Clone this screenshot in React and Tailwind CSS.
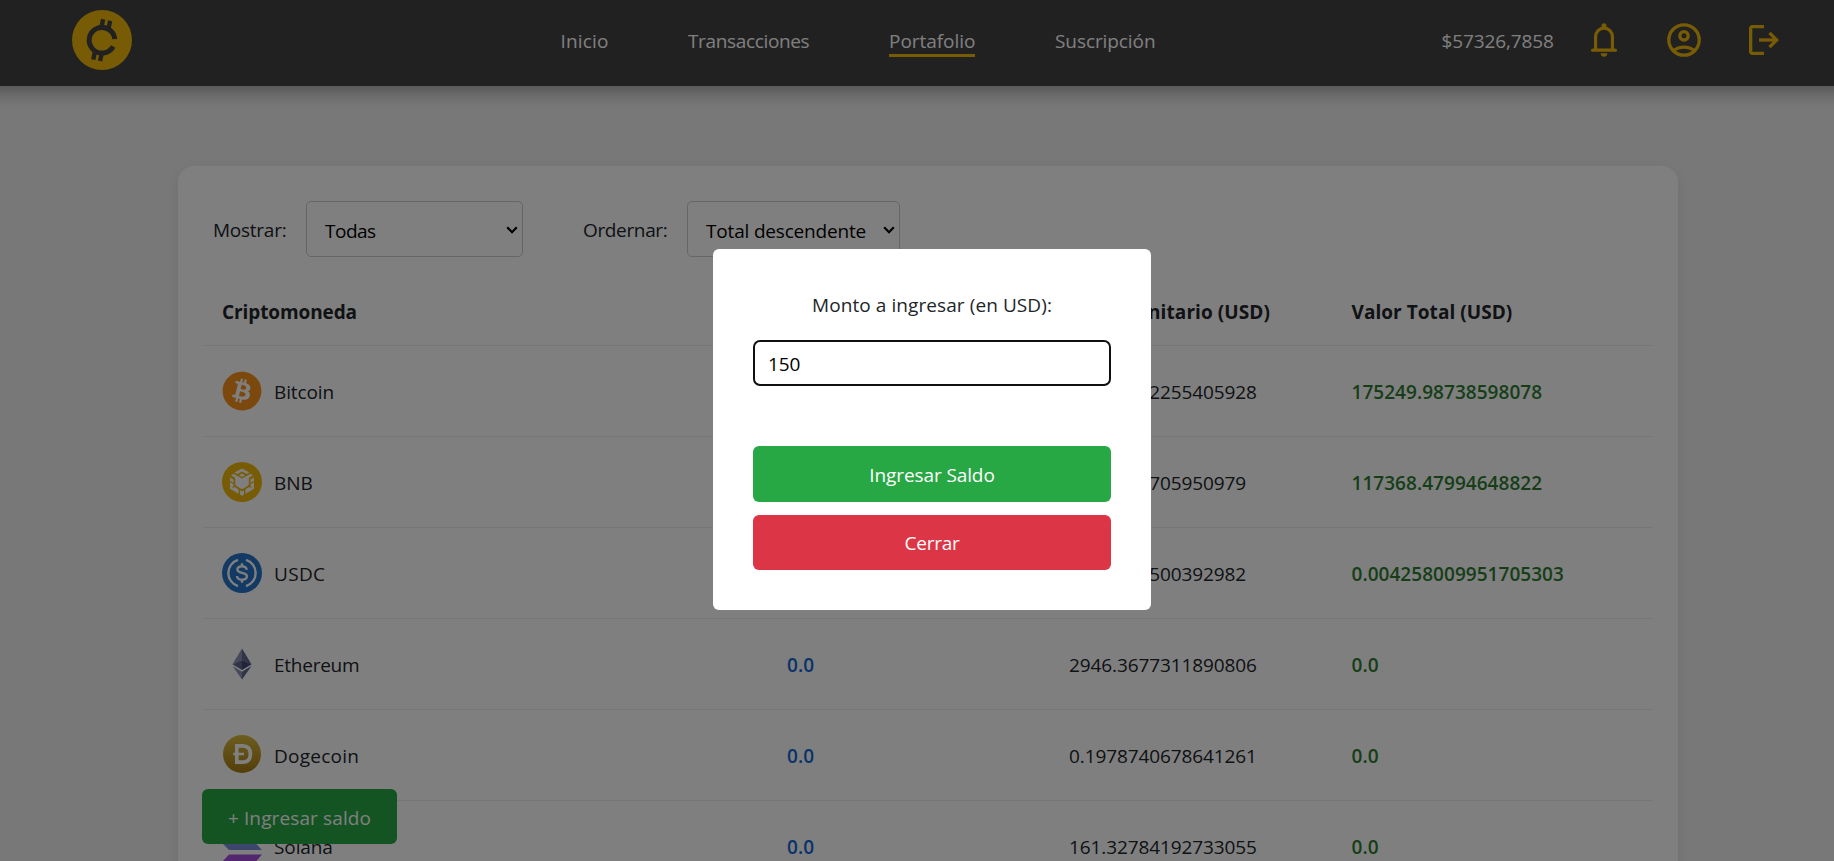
import React from "react";
import { FaBitcoin } from "react-icons/fa";

const FONT = "font-['Open_Sans','Noto_Sans',sans-serif]";

function Logo() {
  return (
    <svg className="size-[60px]" viewBox="0 0 60 60">
      <circle cx="30" cy="30" r="30" fill="#f0b90b" />
      <g transform="rotate(12 30 30)" fill="none" stroke="#424242" strokeWidth="5">
        <path d="M42.3 26.500 A12.800 12.800 0 1 0 42.300 34" />
        <path strokeWidth="4.400" d="M26.800 9.500v9M34 9.500v9M25.500 41.500v9.500M32.500 41.500v9.500" />
      </g>
    </svg>
  );
}

function BellIcon() {
  return (
    <svg className="h-[34px] w-[26px]" viewBox="0 0 26 34">
      <g fill="none" stroke="#f0b90b" strokeWidth="3.200">
        <path d="M4.600 26V13.500a8.400 8.400 0 0 1 16.800 0V26" />
        <path d="M1.600 27.200h22.800" strokeLinecap="round" />
      </g>
      <circle cx="13" cy="2.800" r="2.500" fill="#f0b90b" />
      <path d="M9.700 30.300h6.600a3.300 3.400 0 0 1-6.600 0z" fill="#f0b90b" />
    </svg>
  );
}

function UserIcon() {
  return (
    <svg className="size-[34px]" viewBox="0 0 34 34" fill="none" stroke="#f0b90b" strokeWidth="3.300">
      <circle cx="17" cy="17" r="15.200" />
      <circle cx="17" cy="12.800" r="4.200" />
      <path d="M6.500 27.600c2.900-2.200 6.400-3.500 10.500-3.500s7.600 1.300 10.500 3.500" />
    </svg>
  );
}

function LogoutIcon() {
  return (
    <svg className="size-[30px]" viewBox="0 0 30 30" fill="none" stroke="#f0b90b" strokeWidth="3.300">
      <path d="M15 1.650H3.300a1.650 1.650 0 0 0-1.650 1.650v23.400a1.650 1.650 0 0 0 1.650 1.650H15" />
      <path d="M10 15h17.500" />
      <path d="M20.500 7.800 27.700 15l-7.200 7.200" />
    </svg>
  );
}

function Bitcoin() {
  return (
    <span className="flex size-[40px] items-center justify-center rounded-full bg-[radial-gradient(circle,white_60%,transparent_62%)]">
      <FaBitcoin className="size-[40px] text-[#f7931a]" />
    </span>
  );
}

function Bnb() {
  return (
    <svg className="size-[40px]" viewBox="0 0 40 40">
      <circle cx="20" cy="20" r="20" fill="#f0b90b" />
      <g fill="#fff">
        <path d="M20 6.500l7.500 4-2.800 1.500L20 9.500 15.300 12l-2.800-1.500z" />
        <path d="M20 11.500l3 1.700-3 1.700-3-1.700z" />
        <path d="M11.500 11.800L20 16.500l8.500-4.700 2.500 1.500-4.200 2.600v7.300L20 27.200l-6.800-4v-7.300L9 13.300z" />
        <path d="M8 15.500l3.500 2v6.700l5 3v4.500L8 26.800z" />
        <path d="M32 15.500l-3.500 2v6.700l-5 3v4.500l8.500-4.900z" />
        <path d="M18 28.300l2 1.100 2-1.100v4.300l-2 1.200-2-1.200z" />
      </g>
      <path d="M8 19.500l3.800 2.200M32 19.500l-3.800 2.200M10.500 25.500l3.500-2M29.500 25.500l-3.500-2" stroke="#f0b90b" strokeWidth="1.200" />
    </svg>
  );
}

function Usdc() {
  return (
    <svg className="size-[40px]" viewBox="0 0 40 40">
      <circle cx="20" cy="20" r="20" fill="#2775ca" />
      <g fill="none" stroke="#fff" strokeWidth="2.400">
        <path d="M16 6.900a13.700 13.700 0 0 0 0 26.200M24 6.900a13.700 13.700 0 0 1 0 26.200" />
        <path d="M24.700 16.800c-.3-2.400-2-3.400-4.700-3.400-2.800 0-4.600 1.100-4.600 3.200 0 4.500 9.500 2 9.500 6.700 0 2.200-1.900 3.400-4.900 3.400-3.100 0-4.800-1.300-5-3.700" />
        <path d="M20 10.200v3.500M20 26.300v3.500" />
      </g>
    </svg>
  );
}

function Ethereum() {
  return (
    <svg className="size-[40px]" viewBox="0 0 40 40">
      <path d="M20 4.500 10.500 20.300 20 16z" fill="#8a92b2" />
      <path d="M20 4.500 29.500 20.300 20 16z" fill="#62688f" />
      <path d="M10.500 20.300 20 16v9.900z" fill="#62688f" />
      <path d="M29.500 20.300 20 16v9.900z" fill="#454a75" />
      <path d="M10.500 22.100 20 35.500v-7.800z" fill="#8a92b2" />
      <path d="M29.500 22.100 20 35.500v-7.800z" fill="#62688f" />
    </svg>
  );
}

function Dogecoin() {
  return (
    <svg className="size-[40px]" viewBox="0 0 40 40">
      <defs>
        <linearGradient id="doge" x1="0" y1="0" x2="0" y2="1">
          <stop offset="0" stopColor="#d9bb3c" />
          <stop offset="1" stopColor="#a87c14" />
        </linearGradient>
      </defs>
      <circle cx="20" cy="19" r="19" fill="url(#doge)" />
      <path d="M14.800 10.800h5.700c5.700 0 7.900 3.500 7.900 8.200s-2.200 8.200-7.900 8.200h-5.700z" fill="none" stroke="#fff" strokeWidth="3.700" />
      <path d="M11.300 19H22" stroke="#fff" strokeWidth="2.600" />
    </svg>
  );
}

function Solana() {
  return (
    <svg className="size-[40px]" viewBox="0 0 40 40">
      <path d="M7 4.500h33l-6.500 7H.5z" fill="#3fd0b5" />
      <path d="M0 17h33.500l6.500 7H7z" fill="#7a8fdc" />
      <path d="M7 28.500h33L33.500 36H0z" fill="#a44fe0" />
    </svg>
  );
}

const ROWS = [
  { Icon: Bitcoin, name: "Bitcoin", tracking: "", amount: "1.7025702", price: "102933.02255405928", total: "175249.98738598078" },
  { Icon: Bnb, name: "BNB", tracking: "", amount: "119.08", price: "985.6217705950979", total: "117368.47994648822" },
  { Icon: Usdc, name: "USDC", tracking: "tracking-[0.350px]", amount: "0.0042588", price: "0.999812500392982", total: "0.004258009951705303" },
  { Icon: Ethereum, name: "Ethereum", tracking: "tracking-[-0.250px]", amount: "0.0", price: "2946.3677311890806", total: "0.0" },
  { Icon: Dogecoin, name: "Dogecoin", tracking: "tracking-[0.250px]", amount: "0.0", price: "0.1978740678641261", total: "0.0" },
  { Icon: Solana, name: "Solana", tracking: "", amount: "0.0", price: "161.32784192733055", total: "0.0" },
];

const COLS = "grid grid-cols-[565px_282px_282.500px_1fr]";

function Select({ value, className }) {
  return (
    <div className={`flex h-14 items-center justify-between rounded-[5px] border border-[#ccc] pl-[18px] text-black ${className}`}>
      <span className="pt-1">{value}</span>
      <svg className="mt-0.5 h-[8px] w-[12px]" viewBox="0 0 12 8" fill="none" stroke="#000" strokeWidth="2.200">
        <path d="M1.200 1.200 6 6.200l4.800-5" />
      </svg>
    </div>
  );
}

function Header() {
  return (
    <header className="relative z-10 -mx-6 flex h-[86px] bg-[#424242] px-6 pt-[10px] text-white shadow-[0_6px_16px_rgba(0,0,0,0.330)]">
      <div className="ml-[72px] w-[488.500px]">
        <Logo />
      </div>
      <nav className="flex h-[60px] w-[881px] items-center font-medium">
        <a className="w-[127.500px] pt-0.5 tracking-[0.150px]">Inicio</a>
        <a className="w-[201px] pt-0.5 tracking-[-0.350px]">Transacciones</a>
        <a className="relative mr-[80px] w-[86px] whitespace-nowrap pt-0.5 tracking-[-0.050px]">
          Portafolio
          <span className="absolute -bottom-[2px] left-0 h-[3px] w-full bg-[#f0b90b]" />
        </a>
        <a className="pt-0.5 tracking-[-0.080px]">Suscripción</a>
      </nav>
      <div className="flex h-[60px] items-center">
        <span className="w-[149px] pt-0.5 font-medium tracking-[-0.120px]">$57326,7858</span>
        <BellIcon />
        <span className="ml-[50px] mr-[48px]">
          <UserIcon />
        </span>
        <LogoutIcon />
      </div>
    </header>
  );
}

export default function App() {
  return (
    <div className={`relative h-[861px] overflow-hidden bg-[#f0f0f0] text-[19px] leading-[28px] tracking-[-0.100px] text-[#212529] ${FONT}`}>
      <Header />
      <main className="ml-[178px] mt-20 h-[760px] w-[1500px] rounded-[16px] bg-white px-[25px] pt-[35px] shadow-[0_4px_12px_rgba(0,0,0,0.080)]">
        <div className="flex h-14 items-center pl-[10px]">
          <label className="w-[93px] pt-0.5 tracking-[-0.250px]">Mostrar:</label>
          <Select value="Todas" className="w-[217px] pr-[4px] tracking-[-0.500px]" />
          <label className="ml-[60px] w-[104px] pt-0.5 tracking-[-0.350px]">Ordernar:</label>
          <Select value="Total descendente" className="w-[213px] pr-[4px] tracking-[-0.180px]" />
        </div>
        <div className={`mt-[21px] h-[68px] items-center border-b border-[#e9ecef] pl-[19px] font-bold ${COLS}`}>
          <span>Criptomoneda</span>
          <span />
          <span className="tracking-[0.080px]">Precio Unitario (USD)</span>
          <span className="tracking-[0.050px]">Valor Total (USD)</span>
        </div>
        {ROWS.map(({ Icon, name, tracking, amount, price, total }) => (
          <div key={name} className={`h-[91px] items-center border-b border-[#e9ecef] pl-[19px] ${COLS}`}>
            <div className="flex items-center gap-3">
              <Icon />
              <span className={`pt-0.5 ${tracking}`}>{name}</span>
            </div>
            <span className="pt-0.5 font-semibold tracking-[0.040px] text-[#1266d6]">{amount}</span>
            <span className="pt-0.5">{price}</span>
            <span className="pt-0.5 font-semibold tracking-[0.040px] text-[#2e7d32]">{total}</span>
          </div>
        ))}
      </main>
      <button className="absolute left-[202px] top-[789px] z-10 h-[55px] w-[195px] rounded-[6px] bg-[#28a745] pt-[3px] font-medium tracking-[0.120px] text-white">
        + Ingresar saldo
      </button>
      <div className="absolute inset-0 z-20 bg-black/50">
        <div className="ml-[713px] mt-[249px] flex h-[361px] w-[438px] flex-col rounded-[6px] bg-white px-10 pt-[42px] text-center">
          <label className="tracking-[0.080px]">Monto a ingresar (en USD):</label>
          <div className="mt-[21px] flex h-[46px] items-center rounded-[7px] border-2 border-[#101010] pl-[13px] pt-0.5 text-black">150</div>
          <button className="mt-[60px] h-14 rounded-[6px] bg-[#28a745] pt-0.5 font-medium text-white">Ingresar Saldo</button>
          <button className="mt-[13px] h-[55px] rounded-[6px] bg-[#dc3545] font-medium tracking-[-0.250px] text-white">Cerrar</button>
        </div>
      </div>
    </div>
  );
}
